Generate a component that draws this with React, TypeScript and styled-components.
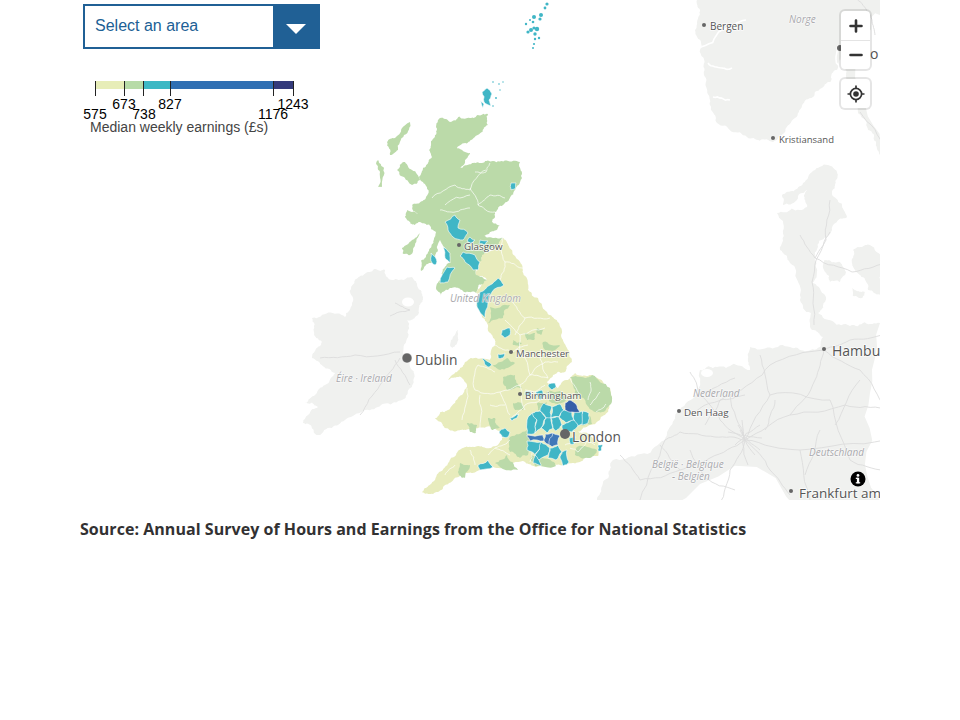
import React from "react";
import styled, { createGlobalStyle } from "styled-components";

const Global = createGlobalStyle`
  html, body { margin: 0; padding: 0; background: #fff; }
  body { font-family: "Liberation Sans", Arial, sans-serif; }
`;

const Page = styled.main`
  width: 800px;
  margin: 0 auto;
`;
const MapFrame = styled.div`
  position: relative;
  width: 800px;
  height: 500px;
  overflow: hidden;
`;
const MapSvg = styled.svg`
  display: block;
  width: 800px;
  height: 500px;
`;
const AreaSelect = styled.div`
  position: absolute;
  left: 3px;
  top: 4px;
  width: 237px;
  height: 45px;
  box-sizing: border-box;
  display: flex;
  border: 2px solid #206095;
  background: #fff;
`;
const SelectText = styled.span`
  flex: 1;
  padding-left: 10px;
  font-size: 16px;
  line-height: 39px;
  color: #206095;
`;
const SelectArrow = styled.span`
  width: 46px;
  margin: -2px -1px -2px 0;
  background: #206095;
  display: flex;
  align-items: center;
  justify-content: center;
  &::after {
    content: "";
    margin-top: 4px;
    border-left: 10px solid transparent;
    border-right: 10px solid transparent;
    border-top: 10px solid #fff;
  }
`;
const LegendSvg = styled.svg`
  position: absolute;
  left: 0;
  top: 70px;
  width: 260px;
  height: 70px;
`;
const LegendNumber = styled.text`
  font: 14px "Liberation Sans", Arial, sans-serif;
  fill: #000;
  text-anchor: middle;
`;
const LegendTitle = styled.text`
  font: 14px "Liberation Sans", Arial, sans-serif;
  fill: #444;
`;
const Controls = styled.div`
  position: absolute;
  right: 10px;
  top: 11px;
  display: flex;
  flex-direction: column;
  gap: 10px;
`;
const ControlGroup = styled.div`
  width: 29px;
  background: #fff;
  border-radius: 4px;
  box-shadow: 0 0 0 2px rgba(0, 0, 0, 0.1);
  display: flex;
  flex-direction: column;
`;
const ControlButton = styled.div<{ $divided?: boolean }>`
  width: 29px;
  height: 29px;
  display: flex;
  align-items: center;
  justify-content: center;
  border-top: ${(p) => (p.$divided ? "1px solid #e4e4e4" : "0")};
  box-sizing: border-box;
`;
const InfoButton = styled.div`
  position: absolute;
  right: 14px;
  bottom: 13px;
  width: 16px;
  height: 16px;
  line-height: 0;
`;
const Source = styled.p`
  margin: 18px 0 0;
  font: 700 16px/22px "Open Sans", sans-serif;
  letter-spacing: 0.04px;
  color: #323132;
`;
const CityLabel = styled.text<{ $size: number }>`
  font-family: "Open Sans", sans-serif;
  font-size: ${(p) => p.$size}px;
  fill: #555;
  stroke: #fff;
  stroke-width: 1.6px;
  stroke-opacity: 0.75;
  paint-order: stroke;
`;
const CountryLabel = styled.text`
  font-family: "Open Sans", sans-serif;
  font-size: 10px;
  font-style: italic;
  fill: #a9a9ad;
  stroke: #fff;
  stroke-width: 1.2px;
  stroke-opacity: 0.7;
  paint-order: stroke;
`;

const LAND = "#f0f1ef";
const Y = "#e8ecbd";
const G = "#bbdaa9";
const T = "#41b6c6";
const B = "#3f78b8";
const N = "#3560a8";

/* Deterministic midpoint displacement, so hand-traced outlines read as coastlines. */
function makeRandom(seedText: string) {
  let s = 17;
  for (let i = 0; i < seedText.length; i++) s = (s * 31 + seedText.charCodeAt(i)) >>> 0;
  return () => {
    s = (s * 1664525 + 1013904223) >>> 0;
    return s / 4294967296 - 0.5;
  };
}
type P = [number, number];
function split(a: P, b: P, rough: number, depth: number, rnd: () => number, out: P[]) {
  const len = Math.hypot(b[0] - a[0], b[1] - a[1]);
  if (depth === 0 || len < 1.6) {
    out.push(b);
    return;
  }
  const o = rnd() * len * rough;
  const m: P = [(a[0] + b[0]) / 2 - ((b[1] - a[1]) / len) * o, (a[1] + b[1]) / 2 + ((b[0] - a[0]) / len) * o];
  split(a, m, rough, depth - 1, rnd, out);
  split(m, b, rough, depth - 1, rnd, out);
}
function parse(points: string): P[] {
  return points.split(/\s+/).map((t) => t.split(",").map(Number) as P);
}
function roughPolygon(points: string, rough = 0.4, depth = 4) {
  const pts = parse(points);
  const rnd = makeRandom(points);
  const out: P[] = [];
  pts.forEach((p, i) => split(p, pts[(i + 1) % pts.length], rough, depth, rnd, out));
  return out.map((p) => `${p[0].toFixed(1)},${p[1].toFixed(1)}`).join(" ");
}
function roughLine(points: string, rough = 0.25, depth = 3) {
  const pts = parse(points);
  const rnd = makeRandom(points);
  const out: P[] = [pts[0]];
  for (let i = 0; i < pts.length - 1; i++) split(pts[i], pts[i + 1], rough, depth, rnd, out);
  return out.map((p) => `${p[0].toFixed(1)},${p[1].toFixed(1)}`).join(" ");
}

const land: string[] = [
  "355,280 370,272 385,270 388,278 412,277 423,297 418,315 407,320 403,353 412,370 412,387 402,400 378,407 345,420 318,435 303,423 318,407 305,403 325,385 335,373 312,358 322,342 312,318 345,317 352,303",
  "697,0 700,10 695,30 700,50 704,75 710,100 717,123 747,137 773,142 795,118 813,97 830,82 837,70 838,43 842,62 846,75 858,113 868,130 880,155 880,0",
  "828,165 837,172 832,193 847,217 832,230 815,257 812,283 826,300 818,313 850,326 880,323 880,510 590,510 597,498 610,470 613,460 660,443 670,427 680,410 700,370 717,367 750,370 750,347 790,347 820,347 823,337 812,330 800,300 790,263 780,250 777,213 807,207 807,190 783,205 782,195 803,183",
  "824,260 840,262 846,272 840,282 830,282 825,272",
  "853,250 870,245 885,255 885,300 868,290 855,270",
  "852,288 865,292 862,298 853,296",
  "450,345 458,330 458,338 452,348",
  "871,-2 885,-2 885,20 874,12",
];

const fjords: string[] = [
  "698,48 722,30 746,20",
  "708,63 722,68 732,68",
  "713,97 730,100",
  "840,68 838,45",
];

const scotland =
  "440,118 450,122 470,118 488,114 488,125 475,137 457,148 470,153 460,168 473,163 493,161 520,162 522,173 515,190 503,205 495,212 492,222 500,225 483,235 503,238 494,247 482,255 476,275 487,280 476,293 462,290 450,288 441,296 436,288 441,278 450,263 444,247 440,240 433,262 421,271 428,252 436,232 420,222 410,224 418,215 412,205 424,200 427,187 419,177 423,168 432,157 431,143 437,130";

const england =
  "503,238 512,250 522,265 528,290 538,298 550,315 562,333 568,350 572,362 565,372 553,375 547,382 558,388 575,373 592,375 610,388 612,400 605,415 590,425 578,432 590,435 601,448 598,456 580,462 560,465 540,466 525,462 505,468 480,470 466,473 455,478 445,485 428,494 422,492 435,480 445,467 459,450 475,447 492,447 503,436 495,428 478,428 460,430 445,428 435,418 448,410 462,395 467,385 461,377 448,380 460,368 468,360 482,358 490,360 495,345 490,333 488,325 482,317 476,305 482,293 476,293 487,280 476,275 482,255 494,247";

const greens: string[] = [
  "410,122 404,135 398,150 390,155 387,142 395,138",
  "405,162 412,170 420,180 412,185 405,178 397,170",
  "378,160 384,168 382,187 378,187 380,172 376,163",
  "407,210 420,215 415,225 410,222 405,217",
  "420,233 415,245 410,255 403,254 402,248 412,240",
  "490,307 510,305 503,318 488,323",
  "495,463 507,455 518,470 500,467",
  "510,437 527,430 528,455 520,458 510,452",
  "460,463 470,465 465,478 459,475",
  "570,377 585,378 592,375 610,388 612,400 602,412 592,410 585,400 575,395",
  "493,365 507,358 515,363 500,370",
  "503,377 515,375 522,388 507,390",
  "488,418 495,418 500,428 492,430",
  "467,423 477,425 476,433 470,432",
  "577,447 597,450 590,458 575,455",
  "543,342 560,345 555,350 545,350",
  "525,333 535,333 534,340 527,340",
  "537,328 543,330 541,335 537,333",
  "513,340 522,343 519,346 513,345",
  "513,403 522,403 523,410 515,410",
  "537,403 547,402 547,410 538,410",
  "546,392 560,391 566,400 552,403",
  "580,418 590,416 592,424 582,426",
  "531,455 549,459 556,466 535,466",
];

const teals: string[] = [
  "445,222 455,215 460,220 458,228 468,233 463,240 453,237 448,230",
  "470,237 475,240 472,244 467,241",
  "480,240 488,241 485,245 479,244",
  "463,252 475,255 480,262 478,270 473,270 465,262 460,256",
  "443,247 450,253 450,263 445,258",
  "447,267 455,268 448,282 440,283",
  "431,253 437,262 435,265 432,263",
  "498,278 504,285 492,292 488,303 485,318 477,307 480,292 490,285",
  "511,183 516,183 515,189 511,190",
  "482,92 487,88 492,94 489,100 491,106 484,102",
  "480,100 484,104 483,108",
  "502,330 510,328 510,335 505,338 501,335",
  "482,358 492,365 488,367 485,365",
  "498,354 505,353 503,358 498,358",
  "548,385 555,383 556,387 552,390",
  "510,418 519,414 517,418 512,421",
  "499,432 505,428 510,432 508,437 502,437",
  "478,465 488,460 493,467 480,470",
  "598,445 603,445 601,451 598,451",
  "527,420 532,413 537,420 535,433 527,434",
  "532,413 540,411 546,418 541,428 535,433 537,420",
  "540,411 544,403 552,407 551,418 546,418",
  "552,407 560,404 564,410 559,417 551,418",
  "564,410 572,412 574,420 566,423 559,417",
  "574,412 582,411 586,420 578,426 574,420",
  "583,411 589,413 588,423 582,425",
  "541,428 546,418 551,418 553,428 547,433",
  "553,428 551,418 559,417 562,425 556,431",
  "562,425 566,423 574,420 578,426 572,432 563,430",
  "527,441 541,442 541,448 535,455 527,450",
  "541,442 550,448 548,455 539,460 535,455",
  "535,455 539,460 541,466 533,463",
  "550,448 558,445 562,452 556,460 548,458",
  "562,452 567,450 569,462 563,466 560,458",
  "569,438 576,437 574,444 570,444",
  "537,396 535,392 542,390 545,396 541,400",
  "526,391 531,392 529,396 525,395",
];

const blues: [string, string][] = [
  ["527,435 543,435 544,441 530,441", B],
  ["565,403 570,400 576,404 580,412 572,412 565,410", N],
  ["545,434 553,433 556,440 549,445 544,441", B],
  ["553,433 560,436 558,445 552,447 549,445", B],
];

const speckles: [number, number, number][] = [
  [547, 4, 1.6], [545, 8, 1.4], [534, 17, 2], [533, 22, 1.3], [541, 15, 2], [540, 19, 1.6],
  [531, 30, 2], [534, 28, 1.6], [537, 29, 2.2], [528, 32, 1.6], [535, 34, 1.7], [535, 39, 1.2],
  [534, 44, 1.1], [533, 48, 1], [526, 24, 1.2], [530, 20, 1], [539, 38, 1.2], [493, 82, 0.8],
  [499, 84, 0.8], [503, 82, 0.7], [496, 98, 0.9], [500, 90, 0.7], [493, 106, 0.8],
];

const districtLines: string[] = [
  "432,198 455,185 470,190 486,170",
  "470,188 478,205 495,212",
  "478,205 490,195 505,198",
  "445,205 470,195",
  "490,163 486,172 475,172",
  "440,210 455,212 470,208",
  "502,238 505,262 522,268",
  "505,262 500,280",
  "512,300 525,318 550,318",
  "505,320 520,335 545,328",
  "520,335 520,352 556,355",
  "520,352 530,375 548,378",
  "495,372 478,365 475,390",
  "475,390 500,392 510,415",
  "467,388 462,420",
  "480,395 480,428",
  "500,392 520,385 530,375",
  "520,385 525,410",
  "510,440 495,448",
  "470,450 475,465",
  "510,420 525,405 548,395",
  "570,378 580,395",
  "590,382 588,400",
  "600,392 590,405",
  "596,412 606,404",
  "540,352 548,378",
  "525,318 515,335",
  "530,462 535,445",
  "590,436 578,452 570,448",
  "455,465 445,475",
  "495,345 512,352 528,345",
  "530,375 545,362 558,362",
  "490,405 505,405",
  "510,455 495,448 488,455",
  "545,385 535,392 525,390",
  "565,445 580,440 595,445",
];

const roads: string[] = [
  "745,440 720,420 700,395 690,372",
  "745,440 715,437 680,432 665,440",
  "745,440 710,458 680,470 640,480",
  "745,440 730,470 720,505",
  "745,440 770,470 790,495",
  "745,440 790,415 815,380 824,350",
  "745,440 770,395 760,355",
  "745,440 800,450 885,440",
  "790,415 845,405 885,410",
  "824,350 860,370 885,410",
  "824,350 850,340 885,335",
  "824,350 770,365 730,395 690,415",
  "640,480 620,455",
  "665,440 640,500",
  "680,470 660,445",
  "800,450 810,500",
  "730,395 745,440",
  "770,395 830,400",
  "700,395 735,378",
  "830,400 850,460 885,470",
  "738,425 755,455",
  "735,445 760,425",
  "740,430 760,450",
  "742,420 748,465",
  "728,432 762,438",
  "765,430 775,400",
  "705,425 720,400 745,395",
  "690,450 705,478 735,490",
  "820,430 805,475",
  "860,380 835,425",
  "814,325 812,282 826,240 830,200",
  "800,235 815,258 830,232",
  "815,258 852,272 885,262",
  "320,358 355,355 400,352",
  "395,303 410,310 390,316",
  "400,358 380,385 360,415",
  "395,360 410,385",
  "860,112 885,150",
  "856,-2 872,20 875,35",
];

const cities: { x: number; y: number; t: string; s: number; off: number }[] = [
  { x: 704, y: 25, t: "Bergen", s: 10, off: 6 },
  { x: 773, y: 138, t: "Kristiansand", s: 9.5, off: 6 },
  { x: 824, y: 349, t: "Hamburg", s: 14, off: 8 },
  { x: 679, y: 411, t: "Den Haag", s: 9.8, off: 5 },
  { x: 791, y: 491, t: "Frankfurt am Main", s: 13.5, off: 8 },
  { x: 459, y: 245, t: "Glasgow", s: 9.8, off: 5 },
  { x: 511, y: 352, t: "Manchester", s: 9.6, off: 5 },
  { x: 520, y: 394, t: "Birmingham", s: 9.8, off: 5 },
];

const countries: [number, number, string][] = [
  [789, 23, "Norge"],
  [450, 302, "United Kingdom"],
  [336, 382, "Éire · Ireland"],
  [693, 397, "Nederland"],
  [652, 468, "België · Belgique"],
  [672, 480, "- Belgien"],
  [809, 456, "Deutschland"],
];

const legendStops: [number, number, string][] = [
  [95, 119, "575"],
  [124, 109, "673"],
  [144, 119, "738"],
  [170, 109, "827"],
  [273, 119, "1176"],
  [293, 109, "1243"],
];
const legendBars: [number, number, string][] = [
  [95, 29, "#e7edb8"],
  [124, 19, "#b7dba7"],
  [143, 27, "#3cb8c4"],
  [170, 103, "#2f6fb3"],
  [273, 20, "#333a7b"],
];

export default function App() {
  return (
    <Page>
      <Global />
      <MapFrame>
        <MapSvg viewBox="80 0 800 500" aria-label="Map of median weekly earnings">
          <defs>
            <filter id="soft" x="0" y="0" width="100%" height="100%">
              <feGaussianBlur stdDeviation="0.4" />
            </filter>
          </defs>
          <g filter="url(#soft)">
            {land.map((p) => (
              <polygon key={p} points={roughPolygon(p, 0.35, 4)} fill={LAND} />
            ))}
            <ellipse cx="408" cy="302" rx="6" ry="4.5" fill="#fff" />
            <ellipse cx="707" cy="373" rx="6" ry="4" fill="#fff" />
            {fjords.map((d) => (
              <polyline key={d} points={roughLine(d, 0.3, 3)} fill="none" stroke="#fff" strokeWidth="1.6" />
            ))}
            {roads.map((d) => (
              <polyline key={d} points={roughLine(d, 0.14, 3)} fill="none" stroke="#dcdcdc" strokeWidth="0.9" />
            ))}
            <polygon points={roughPolygon(england, 0.32, 4)} fill={Y} />
            <polygon points={roughPolygon(scotland, 0.38, 4)} fill={G} />
            {greens.map((p) => (
              <polygon key={p} points={roughPolygon(p, 0.35, 3)} fill={G} />
            ))}
            {districtLines.map((d) => (
              <polyline key={d} points={roughLine(d, 0.22, 3)} fill="none" stroke="#fff" strokeWidth="0.8" opacity="0.85" />
            ))}
            {teals.map((p) => (
              <polygon key={p} points={roughPolygon(p, 0.25, 2)} fill={T} stroke="#fff" strokeWidth="0.6" />
            ))}
            {speckles.map(([x, y, r]) => (
              <circle key={`${x}-${y}`} cx={x} cy={y} r={r} fill={T} />
            ))}
            {blues.map(([p, c]) => (
              <polygon key={p} points={roughPolygon(p, 0.25, 2)} fill={c} stroke="#fff" strokeWidth="0.6" />
            ))}
          </g>
          {countries.map(([x, y, t]) => (
            <CountryLabel key={t} x={x} y={y}>
              {t}
            </CountryLabel>
          ))}
          {cities.map((c) => (
            <g key={c.t}>
              <circle cx={c.x} cy={c.y} r={2} fill="#666" />
              <CityLabel $size={c.s} x={c.x + c.off} y={c.y + c.s / 2}>
                {c.t}
              </CityLabel>
            </g>
          ))}
          <circle cx="840" cy="48" r="3" fill="#666" />
          <CityLabel $size={14} x="849" y="59">Oslo</CityLabel>
          <circle cx="407" cy="358" r="5" fill="#666" stroke="#fff" strokeWidth="0.5" />
          <CityLabel $size={13.8} x="415" y="365">Dublin</CityLabel>
          <circle cx="565" cy="434" r="5" fill="#666" />
          <CityLabel $size={13.7} x="572" y="442">London</CityLabel>
        </MapSvg>
        <AreaSelect>
          <SelectText>Select an area</SelectText>
          <SelectArrow />
        </AreaSelect>
        <LegendSvg viewBox="80 70 260 70">
          {legendBars.map(([x, w, c]) => (
            <rect key={x} x={x} y={81} width={w} height={8} fill={c} />
          ))}
          {[95, 124, 143, 170, 273, 293].map((x) => (
            <line key={x} x1={x + 0.5} x2={x + 0.5} y1={81} y2={96} stroke="#222" strokeWidth="1" />
          ))}
          {legendStops.map(([x, y, t]) => (
            <LegendNumber key={t} x={x} y={y}>
              {t}
            </LegendNumber>
          ))}
          <LegendTitle x={90} y={132}>
            Median weekly earnings (£s)
          </LegendTitle>
        </LegendSvg>
        <Controls>
          <ControlGroup>
            <ControlButton>
              <svg width="14" height="14" viewBox="0 0 14 14">
                <path d="M7 1.5v11M1.5 7h11" stroke="#333" strokeWidth="2.6" strokeLinecap="round" />
              </svg>
            </ControlButton>
            <ControlButton $divided>
              <svg width="14" height="14" viewBox="0 0 14 14">
                <path d="M1.5 7h11" stroke="#333" strokeWidth="2.6" strokeLinecap="round" />
              </svg>
            </ControlButton>
          </ControlGroup>
          <ControlGroup>
            <ControlButton>
              <svg width="18" height="18" viewBox="0 0 18 18">
                <circle cx="9" cy="9" r="5.6" fill="none" stroke="#333" strokeWidth="1.7" />
                <circle cx="9" cy="9" r="2.8" fill="#333" />
                <path d="M9 0.5v3M9 14.5v3M0.5 9h3M14.5 9h3" stroke="#333" strokeWidth="1.7" />
              </svg>
            </ControlButton>
          </ControlGroup>
        </Controls>
        <InfoButton>
          <svg width="16" height="16" viewBox="0 0 16 16">
            <circle cx="8" cy="8" r="7.5" fill="#000" />
            <rect x="6.9" y="6.7" width="2.3" height="5.6" fill="#fff" />
            <rect x="5.8" y="6.7" width="2" height="1.3" fill="#fff" />
            <rect x="5.8" y="11.2" width="4.4" height="1.2" fill="#fff" />
            <circle cx="8" cy="4.4" r="1.4" fill="#fff" />
          </svg>
        </InfoButton>
      </MapFrame>
      <Source>Source: Annual Survey of Hours and Earnings from the Office for National Statistics</Source>
    </Page>
  );
}
